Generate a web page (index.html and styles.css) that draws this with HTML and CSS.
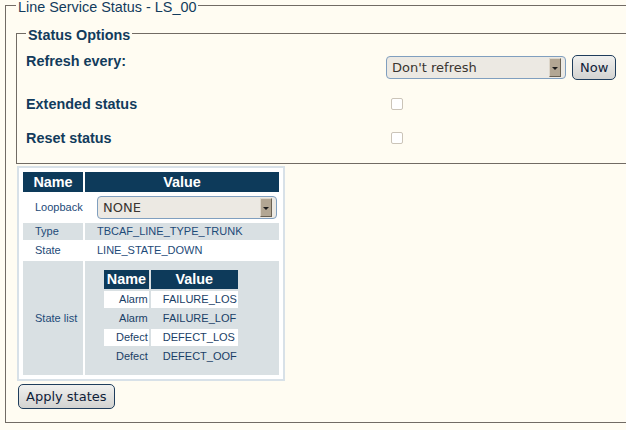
FILE: index.html
```html
<!DOCTYPE html>
<html>
<head>
<meta charset="utf-8">
<title>Line Service Status</title>
<link rel="stylesheet" href="styles.css">
</head>
<body>
<fieldset class="panel">
  <legend class="panel-title">Line Service Status - LS_00</legend>
  <fieldset class="options">
    <legend class="options-title">Status Options</legend>
    <div class="opt-row opt-row-first">
      <div class="opt-label">Refresh every:</div>
      <div class="opt-value">
        <div class="select-wrap select-refresh">
          <select class="select"><option>Don't refresh</option></select>
          <span class="select-arrow"></span>
        </div>
        <button class="btn btn-now">Now</button>
      </div>
    </div>
    <div class="opt-row">
      <div class="opt-label">Extended status</div>
      <div class="opt-value"><input type="checkbox" class="check"></div>
    </div>
    <div class="opt-row">
      <div class="opt-label">Reset status</div>
      <div class="opt-value"><input type="checkbox" class="check"></div>
    </div>
  </fieldset>
  <div class="table-box">
    <table class="grid">
      <thead>
        <tr><th class="col-name">Name</th><th class="col-value">Value</th></tr>
      </thead>
      <tbody>
        <tr class="row-plain">
          <td class="cell-name">Loopback</td>
          <td class="cell-value cell-select">
            <div class="select-wrap select-loop">
              <select class="select"><option>NONE</option></select>
              <span class="select-arrow"></span>
            </div>
          </td>
        </tr>
        <tr class="row-shade">
          <td class="cell-name">Type</td>
          <td class="cell-value">TBCAF_LINE_TYPE_TRUNK</td>
        </tr>
        <tr class="row-plain">
          <td class="cell-name">State</td>
          <td class="cell-value">LINE_STATE_DOWN</td>
        </tr>
        <tr class="row-shade">
          <td class="cell-name">State list</td>
          <td class="cell-value">
            <table class="subgrid">
              <thead>
                <tr><th class="sub-name">Name</th><th class="sub-value">Value</th></tr>
              </thead>
              <tbody>
                <tr class="sub-odd"><td class="sub-n">Alarm</td><td class="sub-v">FAILURE_LOS</td></tr>
                <tr><td class="sub-n">Alarm</td><td class="sub-v">FAILURE_LOF</td></tr>
                <tr class="sub-odd"><td class="sub-n">Defect</td><td class="sub-v">DEFECT_LOS</td></tr>
                <tr><td class="sub-n">Defect</td><td class="sub-v">DEFECT_OOF</td></tr>
              </tbody>
            </table>
          </td>
        </tr>
      </tbody>
    </table>
  </div>
  <button class="btn btn-apply">Apply states</button>
</fieldset>
</body>
</html>
```
FILE: styles.css
```css
html {
  overflow: hidden;
  background: #fffcf2;
}

body {
  margin: 0;
  background: #fffcf2;
  font-family: "Liberation Sans", Arial, sans-serif;
  color: #123b5c;
}

.panel {
  margin: 0 0 0 5px;
  width: 760px;
  border: 1px solid #716b64;
  padding: 17px 0 13px 10px;
  min-width: 0;
}

.panel-title,
.options-title {
  font-size: 14.4px;
  line-height: 8px;
  padding: 3px 2px 0;
  color: #123b5c;
}

.panel-title {
  font-weight: normal;
}

.options-title {
  font-weight: bold;
}

.options {
  margin: 0;
  border: 1px solid #716b64;
  padding: 14px 0 8px 9px;
  min-width: 0;
}

.opt-row {
  display: flex;
  align-items: center;
  height: 34px;
}

.opt-row-first {
  height: 29px;
  align-items: flex-start;
  margin-bottom: 5px;
}

.opt-label {
  width: 360px;
  font-size: 14.4px;
  font-weight: bold;
  line-height: 17px;
  color: #123b5c;
}

.opt-value {
  display: flex;
  align-items: center;
  height: 100%;
}

.select-wrap {
  position: relative;
  height: 23px;
}

.select-refresh {
  width: 180px;
}

.select-loop {
  width: 180px;
}

.select {
  appearance: none;
  -webkit-appearance: none;
  display: block;
  width: 100%;
  height: 23px;
  margin: 0;
  border: 1px solid #809fbf;
  border-radius: 4px;
  background: #ece9e3;
  font-family: "DejaVu Sans", Verdana, sans-serif;
  font-size: 13px;
  color: #3a3530;
  padding: 0 0 0 5px;
}

.select-arrow {
  position: absolute;
  right: 5px;
  top: 2px;
  bottom: 2px;
  width: 10px;
  background: #b2a693;
  border: 1px solid;
  border-color: #ddd6ca #6a6152 #6a6152 #ddd6ca;
}

.select-arrow::after {
  content: "";
  position: absolute;
  left: 2px;
  top: 8px;
  border-left: 3px solid transparent;
  border-right: 3px solid transparent;
  border-top: 3px solid #1c1c1c;
}

.btn {
  font-family: "DejaVu Sans", Verdana, sans-serif;
  font-size: 13px;
  color: #0e2038;
  height: 25px;
  padding: 0 7px;
  border: 1px solid #1f3d5c;
  border-radius: 5px;
  background: linear-gradient(#f0f0ee, #d3d3d1);
  margin: 0;
}

.btn-now {
  margin-left: 6px;
}

.check {
  appearance: none;
  -webkit-appearance: none;
  width: 12px;
  height: 12px;
  margin: 0 0 0 5px;
  border: 1px solid #cbc4b8;
  border-radius: 2px;
  background: #fff;
}

.table-box {
  display: inline-block;
  margin: 2px 0 0 1px;
  border: 2px solid #d8e1e8;
  background: #fff;
  padding: 2px;
  vertical-align: top;
}

.grid {
  border-collapse: separate;
  border-spacing: 2px;
}

.grid th {
  background: #0d3a5a;
  color: #fff;
  font-size: 14.4px;
  font-weight: bold;
  height: 20px;
  line-height: 20px;
  padding: 0;
  text-align: center;
}

.col-name {
  width: 60px;
}

.col-value {
  width: 194px;
}

.grid td {
  font-size: 11px;
  line-height: 13px;
  color: #1d4a78;
  padding: 2px 0 2px 12px;
  vertical-align: middle;
}

.grid td.cell-value {
  padding-right: 2px;
}

.row-shade > td {
  background: #d9e0e3;
}

.row-plain > td {
  background: #fff;
}

.subgrid {
  border-collapse: separate;
  border-spacing: 2px;
  margin: 5px 0 6px 5px;
}

.subgrid th {
  background: #0d3a5a;
  color: #fff;
  font-size: 14.4px;
  font-weight: bold;
  height: 19px;
  line-height: 19px;
  padding: 0;
  text-align: center;
}

.sub-name {
  width: 44px;
}

.sub-value {
  width: 87px;
}

.grid .subgrid td {
  font-size: 11px;
  line-height: 13px;
  color: #1a3e66;
  padding: 2px 1px 2px 12px;
  background: transparent;
}

.grid .subgrid td.sub-n {
  text-align: right;
}

.grid .subgrid tr.sub-odd td {
  background: #fff;
}

.btn-apply {
  display: block;
  margin: 3px 0 0 2px;
}
```
